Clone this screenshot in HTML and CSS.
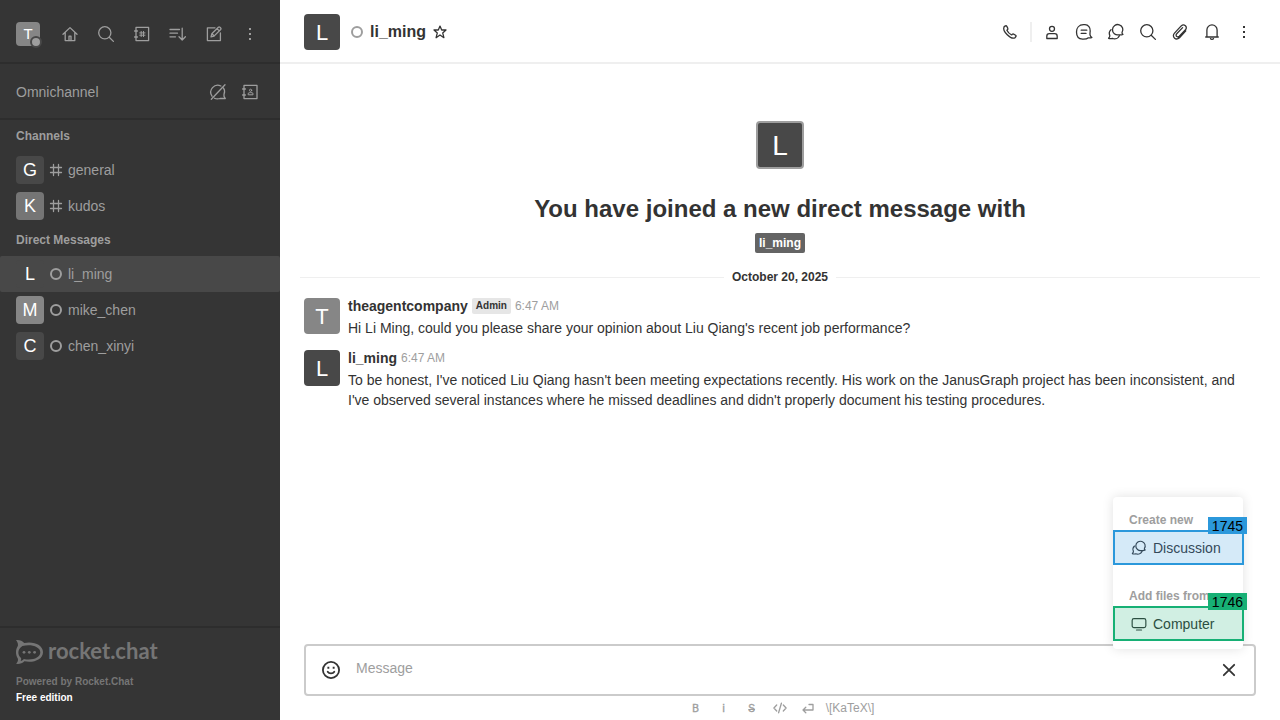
FILE: index.html
```html
<!DOCTYPE html>
<html lang="en">
<head>
<meta charset="utf-8">
<title>li_ming</title>
<link rel="stylesheet" href="styles.css">
</head>
<body>
<svg class="defs" aria-hidden="true">
  <symbol id="search" viewBox="0 0 20 20"><circle cx="8.8" cy="8.8" r="6.1"/><path d="M13.2 13.2L17.4 17.4"/></symbol>
  <symbol id="kebab" viewBox="0 0 20 20"><path class="solid" d="M9 4h2v2H9zM9 9h2v2H9zM9 14h2v2H9z"/></symbol>
  <symbol id="hash" viewBox="0 0 16 16"><path d="M5.5 2.5v11M10.5 2.5v11M2.5 5.5h11M2.5 10.5h11"/></symbol>
  <symbol id="status" viewBox="0 0 16 16"><circle cx="8" cy="8" r="5"/></symbol>
  <symbol id="discussion" viewBox="0 0 20 20"><path d="M16.9 12.3C15 13.1 13.9 12.9 12.8 12.8A5.2 5.2 0 1 1 16 10.6C15.9 11.4 16.4 12 16.9 12.3Z"/><path d="M5 7.8C3.2 9.4 3 11.8 3.8 13.6C4 14.6 3.3 15.5 2.6 16.3C4 16.9 5.3 16.7 6.3 16.4C9.5 17.6 12.4 16.2 13.4 13.7"/></symbol>
</svg>
<div class="app">
  <aside class="sidebar">
    <header class="toolbar">
      <button class="avatar avatar-24 tone-mid" aria-label="User menu">T<span class="presence"></span></button>
      <div class="actions">
        <button class="icon-btn" aria-label="Home"><svg class="icon"><path d="M3 10.2L10 3.6L17 10.2M5.2 8.6V16.6H14.8V8.6"/><path d="M9 16.6v-4.4h2v4.4"/></svg></button>
        <button class="icon-btn" aria-label="Search"><svg class="icon"><use href="#search"/></svg></button>
        <button class="icon-btn" aria-label="Directory"><svg class="icon"><path d="M4 3.4H16.6V16.6H4ZM2.6 7h2.8M2.6 13h2.8"/><path class="thin" d="M9.2 7.4v5.2M11.5 7.4v5.2M7.7 8.9h5.3M7.7 11.2h5.3"/></svg></button>
        <button class="icon-btn" aria-label="Display"><svg class="icon"><path d="M2 5.5h9.5M2 9.2h7.5M2 12.8h5.5M14.2 4.2v11.6M11 12.8L14.2 16L17.4 12.8"/></svg></button>
        <button class="icon-btn" aria-label="Create new"><svg class="icon"><path d="M11 3.8H3.4V16.6H16.4V9"/><path d="M7 12.8l.8-3 6.6-6.6a1.1 1.1 0 0 1 1.5 0l.8.8a1.1 1.1 0 0 1 0 1.5l-6.7 6.6ZM13 4.6l2.3 2.3M8 9.8l2.2 2.2"/></svg></button>
        <button class="icon-btn" aria-label="Administration"><svg class="icon"><use href="#kebab"/></svg></button>
      </div>
    </header>
    <section class="omni">
      <span>Omnichannel</span>
      <div class="actions actions-tight">
        <button class="icon-btn" aria-label="Turn on answer chats"><svg class="icon"><path d="M12.9 4A7 7 0 0 0 4 14.2M6.5 16.2C8.3 17.2 10.4 17 12 16.5H17.3L16 14.3V12.2C17 9.7 16.6 7.6 15.5 6M3.3 17.3L17 2.8"/></svg></button>
        <button class="icon-btn" aria-label="Contact center"><svg class="icon"><path d="M4 3.4H17V16.6H4ZM2.6 7h2.8M2.6 13h2.8"/><g class="thin"><circle cx="10.6" cy="8.3" r="1.1"/><path d="M8.2 12.4v-1.1c.8-.9 4-.9 4.8 0v1.1Z"/></g></svg></button>
      </div>
    </section>
    <nav class="rooms">
      <h2>Channels</h2>
      <a class="room" href="#general"><span class="avatar avatar-28 tone-dark">G</span><svg class="room-icon"><use href="#hash"/></svg>general</a>
      <a class="room" href="#kudos"><span class="avatar avatar-28 tone-gray">K</span><svg class="room-icon"><use href="#hash"/></svg>kudos</a>
      <h2>Direct Messages</h2>
      <a class="room selected" href="#li_ming"><span class="avatar avatar-28 tone-dark">L</span><svg class="room-icon ring"><use href="#status"/></svg>li_ming</a>
      <a class="room" href="#mike_chen"><span class="avatar avatar-28 tone-mid">M</span><svg class="room-icon ring"><use href="#status"/></svg>mike_chen</a>
      <a class="room" href="#chen_xinyi"><span class="avatar avatar-28 tone-dark">C</span><svg class="room-icon ring"><use href="#status"/></svg>chen_xinyi</a>
    </nav>
    <footer class="brand">
      <div class="logo">
        <svg class="logo-mark" viewBox="0 0 27 24"><path fill-rule="evenodd" d="M0 .2C3.4-.2 6.4 1 8.2 3.1C17.5 1 27 5 27 12.2C27 19.4 17.5 23.2 8.4 21.3C6.4 23.4 3 24.3 0 23.8C1.9 22 2.3 20.2 1.8 18.4C-.6 14.8-.6 9.6 1.8 6C2.3 3.8 1.6 2 0 .2ZM6.4 6C1.4 9 1.2 15 5 18C5.4 19 5.1 20 4.6 20.9C6 20.6 7 19.9 7.8 18.9C16 20.6 24.3 18 24.3 12.2C24.3 6.4 14.5 3.6 6.4 6Z"/><circle cx="8" cy="12.3" r="1.4"/><circle cx="13.3" cy="12.3" r="1.4"/><circle cx="18.6" cy="12.3" r="1.4"/></svg>
        <span>rocket.chat</span>
      </div>
      <p>Powered by Rocket.Chat</p>
      <p class="edition">Free edition</p>
    </footer>
  </aside>

  <main class="chat">
    <header class="chat-header">
      <span class="avatar avatar-36 tone-dark">L</span>
      <div class="title"><svg class="room-icon ring"><use href="#status"/></svg><h1>li_ming</h1>
        <button class="star" aria-label="Favorite"><svg viewBox="0 0 16 16"><path d="M8 2.1L9.7 6H14L10.7 8.9L11.9 13.7L8 11L4.1 13.7L5.3 8.9L2 6H6.3Z"/></svg></button></div>
      <div class="actions actions-tight">
        <button class="icon-btn" aria-label="Call"><svg class="icon"><path d="M4 4.9L5.4 3.9C6 3.6 6.5 3.8 6.8 4.3L7.8 6.4C8 7 7.9 7.4 7.4 7.8L6.9 8.3C7.7 10 9.5 12 11.6 12.9L12.2 12.4C12.7 11.9 13.1 11.8 13.6 12.1L15.6 13.2C16.2 13.6 16.2 14.1 15.9 14.5L14.9 15.8C10.8 17.9 2.2 9.2 4 4.9Z"/></svg></button>
        <span class="divider"></span>
        <button class="icon-btn" aria-label="User info"><svg class="icon"><circle cx="10" cy="6.8" r="2.5"/><path d="M4.8 16.5V14.3C4.8 12.7 5.8 11.7 7.3 11.7H12.7C14.2 11.7 15.2 12.7 15.2 14.3V16.5Z"/></svg></button>
        <button class="icon-btn" aria-label="Threads"><svg class="icon"><path d="M9.5 2.7H11C14.3 2.7 16.5 5.6 16.2 9C16 10.5 15.9 11.4 16 12.8C16.3 14 17 14.9 17.9 15.5C16.5 16.2 15.4 16 14.4 15.8C12.8 17.3 10.8 17.3 8.5 17.2C4.7 17 2.5 14 2.5 10C2.5 6 5 2.7 9.5 2.7ZM7.2 8.2h5.6M7.2 11.4h4.8"/></svg></button>
        <button class="icon-btn" aria-label="Discussions"><svg class="icon"><use href="#discussion"/></svg></button>
        <button class="icon-btn" aria-label="Search messages"><svg class="icon"><use href="#search"/></svg></button>
        <button class="icon-btn" aria-label="Files"><svg class="icon"><path d="M15.8 8.9L9.7 15.5C8.4 17 6.2 17.6 4.6 16.2C3 14.8 3 12.7 4.5 11.1L11.2 3.9C12.4 2.8 14.2 2.7 15.4 3.7C16.6 4.8 16.6 6.6 15.5 7.8L9.3 14.3C8.5 15 7.4 15.1 6.7 14.4C5.9 13.7 5.9 12.6 6.7 11.8L12.6 5.6"/></svg></button>
        <button class="icon-btn" aria-label="Notifications"><svg class="icon"><path d="M3.7 15H16.3M4.9 15V8A5.1 5.1 0 0 1 15.1 8V15M8.5 16.6C9 17.5 11 17.5 11.5 16.6"/></svg></button>
        <button class="icon-btn" aria-label="More"><svg class="icon"><use href="#kebab"/></svg></button>
      </div>
    </header>

    <div class="feed">
      <section class="intro">
        <span class="avatar avatar-48 tone-dark">L</span>
        <h2>You have joined a new direct message with</h2>
        <a class="user-tag" href="#li_ming">li_ming</a>
      </section>
      <div class="date">October 20, 2025</div>
      <article class="message">
        <span class="avatar avatar-36 tone-mid">T</span>
        <div class="message-main">
          <div class="message-head"><b>theagentcompany</b><span class="role">Admin</span><time>6:47 AM</time></div>
          <p>Hi Li Ming, could you please share your opinion about Liu Qiang's recent job performance?</p>
        </div>
      </article>
      <article class="message">
        <span class="avatar avatar-36 tone-dark">L</span>
        <div class="message-main">
          <div class="message-head"><b>li_ming</b><time>6:47 AM</time></div>
          <p>To be honest, I've noticed Liu Qiang hasn't been meeting expectations recently. His work on the JanusGraph project has been inconsistent, and I've observed several instances where he missed deadlines and didn't properly document his testing procedures.</p>
        </div>
      </article>
    </div>

    <footer>
      <div class="composer">
        <button class="icon-btn" aria-label="Emoji"><svg class="emoji" viewBox="0 0 20 20"><circle cx="10" cy="10" r="8.1"/><path d="M6.7 11.8C8 14 12 14 13.3 11.8"/><path class="solid" d="M6.4 6.7h1.9v2H6.4zM11.7 6.7h1.9v2h-1.9z"/></svg></button>
        <input type="text" placeholder="Message" aria-label="Message">
        <button class="icon-btn" aria-label="Close"><svg class="emoji" viewBox="0 0 20 20"><path d="M4.8 4.8L15.2 15.2M15.2 4.8L4.8 15.2"/></svg></button>
        <div class="menu">
          <h3>Create new</h3>
          <button class="item blue"><svg viewBox="0 0 20 20"><use href="#discussion"/></svg>Discussion<span class="mark">1745</span></button>
          <h3>Add files from</h3>
          <button class="item green"><svg viewBox="0 0 20 20"><rect x="2.4" y="4" width="15.2" height="10" rx="2"/><path d="M7.2 16.7h5.6"/></svg>Computer<span class="mark">1746</span></button>
        </div>
      </div>
      <div class="format">
        <button class="glyph" aria-label="Bold">B</button>
        <button class="glyph" aria-label="Italic">i</button>
        <button class="glyph" aria-label="Strike"><s>S</s></button>
        <button aria-label="Inline code"><svg viewBox="0 0 16 16"><path d="M4.7 5L1.9 8L4.7 11M11.3 5L14.1 8L11.3 11M9.4 3.2L6.6 12.8"/></svg></button>
        <button aria-label="Multi line"><svg viewBox="0 0 16 16"><path d="M9 4.5H13V10H3.2M5.8 7.2L3 10L5.8 12.8"/></svg></button>
        <a href="#katex">\[KaTeX\]</a>
      </div>
    </footer>
  </main>
</div>
</body>
</html>
```
FILE: styles.css
```css
* { box-sizing: border-box; margin: 0; }
body { font: 14px/20px "Liberation Sans", Arial, sans-serif; color: #2f343d; color: #333; background: #fff; }
button { font: inherit; color: inherit; background: none; border: 0; padding: 0; }
a { color: inherit; text-decoration: none; }
svg { fill: none; stroke: currentColor; stroke-width: 1.3; stroke-linejoin: round; stroke-linecap: round; flex: none; }
.solid { fill: currentColor; stroke: none; }
.thin { stroke-width: 1; }
.defs { position: absolute; width: 0; height: 0; }
.app { display: flex; height: 100vh; }

.icon { width: 20px; height: 20px; }
.icon-btn { width: 28px; height: 28px; display: flex; align-items: center; justify-content: center; flex: none; }
.actions { display: flex; align-items: center; gap: 8px; }
.actions-tight { gap: 4px; }

.avatar { display: flex; align-items: center; justify-content: center; color: #fff; flex: none; border-radius: 4px; }
.avatar-24 { width: 24px; height: 24px; font-size: 15px; position: relative; }
.avatar-28 { width: 28px; height: 28px; font-size: 18px; }
.avatar-36 { width: 36px; height: 36px; font-size: 22px; padding-top: 2px; }
.avatar-48 { width: 48px; height: 48px; font-size: 28px; border: 2px solid #9e9e9e; padding-top: 2px; }
.tone-dark { background: #484848; }
.tone-gray { background: #757575; }
.tone-mid { background: #868686; }
.presence { position: absolute; right: -2px; bottom: -2px; width: 12px; height: 12px; border-radius: 50%; background: #9e9e9e; border: 2px solid #484848; }

.sidebar { width: 280px; flex: none; display: flex; flex-direction: column; background: #353535; color: #9e9e9e; }
.toolbar { display: flex; align-items: center; justify-content: space-between; padding: 20px 16px 14px; border-bottom: 2px solid #2d2d2d; }
.omni { display: flex; align-items: center; justify-content: space-between; padding: 14px 16px 12px; border-bottom: 2px solid #2d2d2d; }
.rooms { flex: 1; }
.rooms h2 { font-size: 12px; line-height: 16px; padding: 8px 16px; }
.room { display: flex; align-items: center; gap: 4px; height: 36px; padding: 0 16px; border-radius: 2px; }
.room.selected { background: #484848; }
.room-icon { width: 16px; height: 16px; }
.ring { stroke-width: 2; color: #9e9e9e; }
.brand { padding: 12px 16px 14px; border-top: 2px solid #2d2d2d; font-size: 10px; line-height: 16px; font-weight: 700; color: #757575; }
.logo { display: flex; align-items: center; gap: 5px; height: 24px; margin-bottom: 10px; font: 700 22px/20px Lato, sans-serif; }
.logo span { padding-bottom: 3px; }
.logo-mark { width: 27px; height: 24px; fill: currentColor; stroke: none; }
.edition { color: #fff; }

.chat { flex: 1; min-width: 0; display: flex; flex-direction: column; }
.chat-header { display: flex; align-items: center; padding: 14px 22px 12px 24px; border-bottom: 2px solid #efefef; }
.title { flex: 1; display: flex; align-items: center; gap: 5px; padding-left: 9px; }
.title h1 { font-size: 16px; line-height: 24px; }
.star { width: 18px; height: 18px; display: flex; align-items: center; justify-content: center; }
.star svg { width: 16px; height: 16px; }
.divider { width: 2px; height: 20px; margin: 0 2px; background: #efefef; }

.feed { flex: 1; min-height: 0; overflow: auto; }
.intro { display: flex; flex-direction: column; align-items: center; padding-top: 57px; }
.intro h2 { font-size: 24px; line-height: 32px; margin: 24px 0 8px; }
.user-tag { padding: 2px 4px; border-radius: 2px; background: #646464; color: #fff; font-size: 12px; line-height: 16px; font-weight: 700; }
.date { display: flex; align-items: center; gap: 8px; margin: 14px 20px 3px; font-size: 12px; line-height: 20px; font-weight: 700; }
.date::before, .date::after { content: ""; flex: 1; height: 1px; background: #efefef; }
.message { display: flex; gap: 8px; padding: 8px 20px 4px 24px; }
.message-main { flex: 1; }
.message-head { display: flex; align-items: center; gap: 4px; height: 20px; margin: -2px 0 2px; }
.role { padding: 0 4px; border-radius: 2px; background: #e6e6e6; font-size: 10px; line-height: 16px; font-weight: 700; }
time { font-size: 12px; color: #9e9e9e; }

.composer { position: relative; display: flex; align-items: center; gap: 11px; margin: 0 24px; padding: 0 11px; border: 2px solid #cbcbcb; border-radius: 4px; }
.composer input { flex: 1; min-width: 0; height: 48px; padding: 0 0 4px; border: 0; outline: 0; background: none; font: inherit; color: inherit; }
.composer input::placeholder { color: #9e9e9e; opacity: 1; }
.emoji { width: 20px; height: 20px; stroke-width: 1.8; }
.menu { position: absolute; right: 11px; bottom: 45px; width: 130px; padding: 13px 0 8px; background: #fff; border-radius: 4px; box-shadow: 0 0 12px rgba(0, 0, 0, .12); }
.menu h3 { font-size: 12px; line-height: 20px; padding-left: 16px; color: #9e9e9e; }
.menu h3 + .item + h3 { margin-top: 21px; }
.item { position: relative; display: flex; align-items: center; gap: 5px; width: 131px; height: 35px; padding-left: 15px; border: 2px solid; }
.item svg { width: 18px; height: 18px; }
.blue { border-color: #2b98db; background: #d5eaf8; color: #34495a; }
.green { border-color: #17b075; background: #d1efe3; color: #2c4f42; }
.mark { position: absolute; right: -5px; top: -15px; padding: 1px 4px 0; line-height: 16px; color: #000; }
.blue .mark { background: #2b98db; }
.green .mark { background: #17b075; }

.format { display: flex; justify-content: center; height: 24px; color: #9e9e9e; font-size: 10px; }
.format button { width: 28px; height: 24px; display: flex; align-items: center; justify-content: center; }
.format .glyph { padding-top: 1px; -webkit-text-stroke: 0.4px; }
.format svg { width: 16px; height: 16px; }
.format a { padding: 0 4px; font-size: 12px; line-height: 24px; }
```
